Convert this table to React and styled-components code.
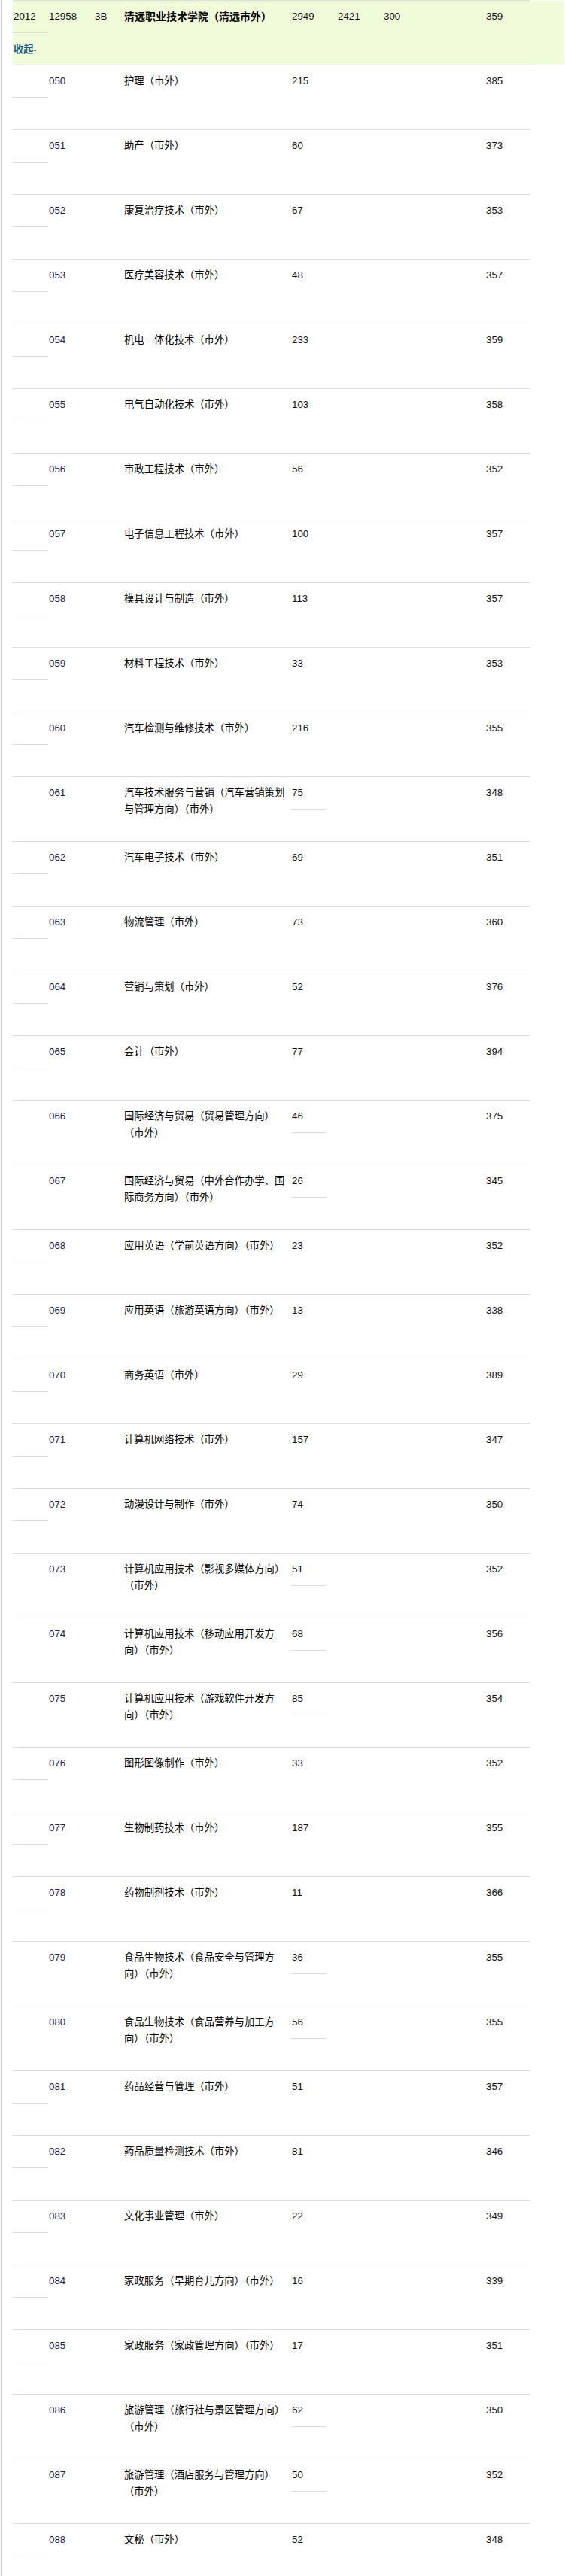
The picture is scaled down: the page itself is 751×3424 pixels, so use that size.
import React from "react";
import styled, { createGlobalStyle } from "styled-components";

const rows = [
  ["050", "护理（市外）", "215", "385"],
  ["051", "助产（市外）", "60", "373"],
  ["052", "康复治疗技术（市外）", "67", "353"],
  ["053", "医疗美容技术（市外）", "48", "357"],
  ["054", "机电一体化技术（市外）", "233", "359"],
  ["055", "电气自动化技术（市外）", "103", "358"],
  ["056", "市政工程技术（市外）", "56", "352"],
  ["057", "电子信息工程技术（市外）", "100", "357"],
  ["058", "模具设计与制造（市外）", "113", "357"],
  ["059", "材料工程技术（市外）", "33", "353"],
  ["060", "汽车检测与维修技术（市外）", "216", "355"],
  ["061", "汽车技术服务与营销（汽车营销策划与管理方向）（市外）", "75", "348"],
  ["062", "汽车电子技术（市外）", "69", "351"],
  ["063", "物流管理（市外）", "73", "360"],
  ["064", "营销与策划（市外）", "52", "376"],
  ["065", "会计（市外）", "77", "394"],
  ["066", "国际经济与贸易（贸易管理方向）（市外）", "46", "375"],
  ["067", "国际经济与贸易（中外合作办学、国际商务方向）（市外）", "26", "345"],
  ["068", "应用英语（学前英语方向）（市外）", "23", "352"],
  ["069", "应用英语（旅游英语方向）（市外）", "13", "338"],
  ["070", "商务英语（市外）", "29", "389"],
  ["071", "计算机网络技术（市外）", "157", "347"],
  ["072", "动漫设计与制作（市外）", "74", "350"],
  ["073", "计算机应用技术（影视多媒体方向）（市外）", "51", "352"],
  ["074", "计算机应用技术（移动应用开发方向）（市外）", "68", "356"],
  ["075", "计算机应用技术（游戏软件开发方向）（市外）", "85", "354"],
  ["076", "图形图像制作（市外）", "33", "352"],
  ["077", "生物制药技术（市外）", "187", "355"],
  ["078", "药物制剂技术（市外）", "11", "366"],
  ["079", "食品生物技术（食品安全与管理方向）（市外）", "36", "355"],
  ["080", "食品生物技术（食品营养与加工方向）（市外）", "56", "355"],
  ["081", "药品经营与管理（市外）", "51", "357"],
  ["082", "药品质量检测技术（市外）", "81", "346"],
  ["083", "文化事业管理（市外）", "22", "349"],
  ["084", "家政服务（早期育儿方向）（市外）", "16", "339"],
  ["085", "家政服务（家政管理方向）（市外）", "17", "351"],
  ["086", "旅游管理（旅行社与景区管理方向）（市外）", "62", "350"],
  ["087", "旅游管理（酒店服务与管理方向）（市外）", "50", "352"],
  ["088", "文秘（市外）", "52", "348"],
];

const App = () => (
  <>
    <GlobalStyle />
    <Page>
      <Table>
        <HeaderRow>
          <div>
            <Mark>2012</Mark>
            <Toggle>
              收起<span>-</span>
            </Toggle>
          </div>
          <Cell>12958</Cell>
          <Cell>3B</Cell>
          <Name bold>清远职业技术学院（清远市外）</Name>
          <Cell>2949</Cell>
          <Cell>2421</Cell>
          <Cell>300</Cell>
          <Cell>359</Cell>
          <div />
        </HeaderRow>
        {rows.map(([code, name, plan, score]) => {
          const twoLines = name.length > 16;
          return (
            <Row key={code}>
              <div>{!twoLines && <Mark />}</div>
              <Cell code>{code}</Cell>
              <div />
              <Name>{name}</Name>
              {twoLines ? (
                <div>
                  <Mark>{plan}</Mark>
                </div>
              ) : (
                <Cell>{plan}</Cell>
              )}
              <div />
              <div />
              <Cell>{score}</Cell>
            </Row>
          );
        })}
      </Table>
    </Page>
  </>
);

const GlobalStyle = createGlobalStyle`
  body {
    margin: 0;
    background: #fff;
    font-family: "Liberation Sans", "Noto Sans CJK SC", sans-serif;
    font-size: 13.33px;
    color: #111;
  }
`;

const Page = styled.div`
  margin-left: 1px;
  border-left: 1px solid #cbcbcb;
  padding-left: 15px;
  min-height: 3424px;
`;

const Table = styled.div`
  width: 687px;
  border-top: 1px solid #dcdcdc;
`;

const Row = styled.div`
  display: grid;
  grid-template-columns: 47px 61px 39px 223px 61px 61px 136px 59px;
  width: 687px;
  height: 85px;
  border-top: 1px solid #dcdcdc;
  &:nth-child(2) {
    border-top-color: #dcdcdc;
  }
`;

const HeaderRow = styled.div`
  display: grid;
  grid-template-columns: 47px 61px 39px 223px 61px 61px 136px 59px 46px;
  width: 733px;
  height: 85px;
  background: #effbd9;
`;

const Cell = styled.div`
  padding: 10px 0 0 1px;
  line-height: 22px;
  color: ${(p) => (p.code ? "#231d52" : "#111")};
  white-space: nowrap;
`;

const Name = styled.div`
  padding: 10px 4px 0 1px;
  line-height: 22px;
  color: #000;
  font-size: ${(p) => (p.bold ? "14px" : "13.33px")};
  font-weight: ${(p) => (p.bold ? "bold" : "normal")};
`;

const Mark = styled.div`
  width: 46px;
  height: 42px;
  line-height: 42px;
  padding-left: 1px;
  box-sizing: content-box;
  border-bottom: 1px solid #dcdcdc;
  white-space: nowrap;
`;

const Toggle = styled.div`
  height: 42px;
  line-height: 44px;
  padding-left: 1px;
  color: #1f5f80;
  font-weight: bold;
  white-space: nowrap;
  span {
    font-weight: normal;
    font-size: 11px;
  }
`;

export default App;
